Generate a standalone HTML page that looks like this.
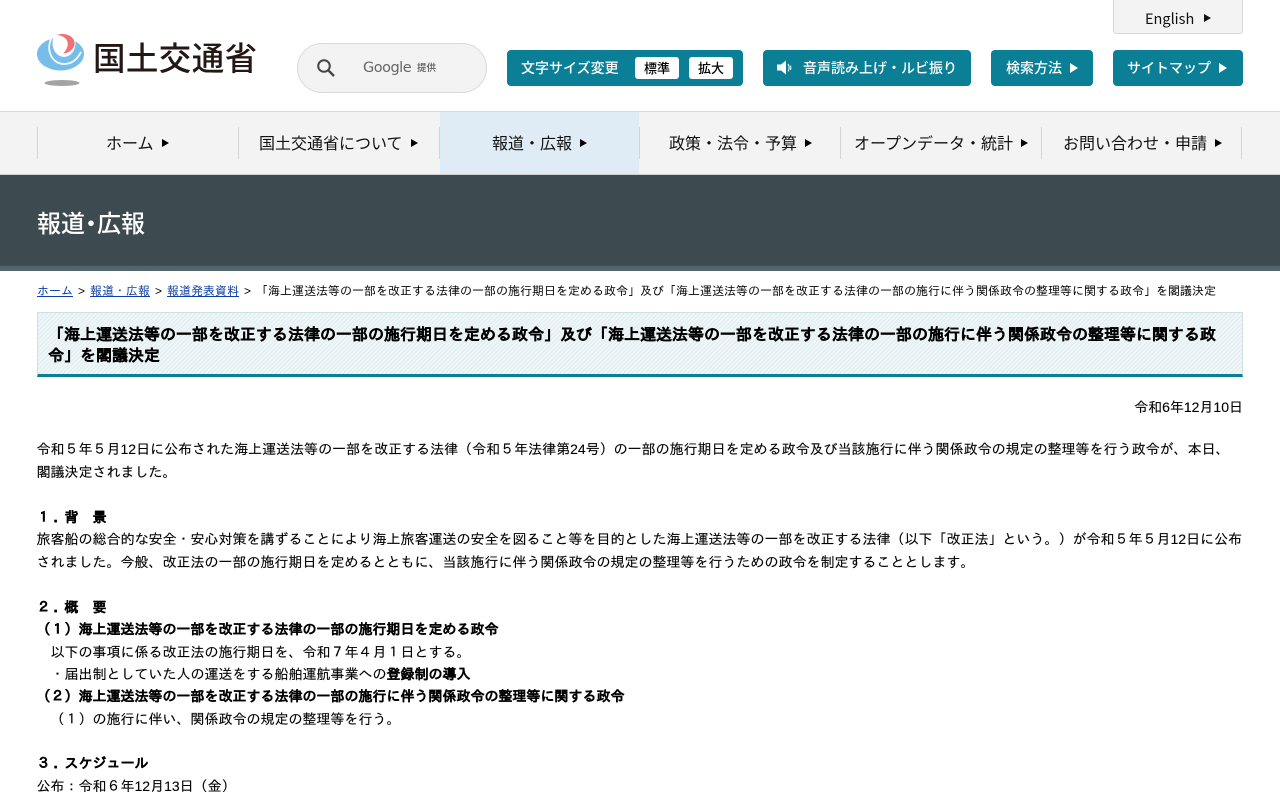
<!DOCTYPE html>
<html lang="ja">
<head>
<meta charset="utf-8">
<title>報道・広報</title>
<style>
html,body{margin:0;padding:0;background:#fff;}
body{width:1280px;height:800px;overflow:hidden;position:relative;font-family:"Liberation Sans","IPAGothic",sans-serif;font-size:14px;color:#000;}
.a{position:absolute;white-space:nowrap;}
.btn{position:absolute;top:50px;height:36px;background:#0b7f96;border-radius:4px;color:#fff;font-weight:500;font-size:14px;line-height:36px;white-space:nowrap;font-family:"Noto Sans CJK JP",sans-serif;}
.btn span{position:absolute;top:0;}
.tri{position:absolute;width:0;height:0;border-style:solid;border-color:transparent transparent transparent currentColor;}
.sep{position:absolute;top:127px;width:1px;height:32px;background:#d4d4d4;}
.nav{position:absolute;top:127px;height:32px;line-height:31px;font-size:16px;white-space:nowrap;font-family:"Noto Sans CJK JP",sans-serif;color:#111;}
.l{position:absolute;left:36.500px;white-space:nowrap;line-height:22px;height:22px;font-size:14px;-webkit-text-stroke:.12px #000;}
b{font-weight:bold;}
a{color:#0b3fa8;text-decoration:underline;}
.bc i{font-style:normal;margin:0 5px;}
.d{position:relative;left:3px;}
</style>
</head>
<body>

<!-- logo -->
<svg class="a" style="left:37px;top:33px" width="48" height="54" viewBox="0 0 48 54">
<ellipse cx="25" cy="50" rx="17.500" ry="3" fill="#a3a3a3"/>
<ellipse cx="23.500" cy="21" rx="23.500" ry="16.500" fill="#76bdea"/>
<path d="M15 4C8 17 15 31 27 31C34 31 40 27 44 19" fill="none" stroke="#fff" stroke-width="1.800"/>
<ellipse cx="27" cy="10" rx="11.500" ry="14" fill="#fff"/>
<path d="M20 2C27 -0.500 36 2 37.500 9C38.500 15 33 20 26 20.500C29.500 17 31.500 13 30.500 9C29.500 5 25.500 2.500 20 2Z" fill="#ee7176"/>
</svg>
<div class="a" style="left:93px;top:36px;font-family:'Noto Sans CJK JP',sans-serif;font-size:32.500px;line-height:42px;letter-spacing:0.400px;color:#231815;font-weight:500">国土交通省</div>

<!-- search -->
<div class="a" style="left:297px;top:43px;width:188px;height:48px;border:1px solid #d9d9d9;border-radius:25px;background:#f3f3f3"></div>
<svg class="a" style="left:316px;top:58px" width="20" height="20" viewBox="0 0 20 20"><circle cx="8" cy="8" r="5.800" fill="none" stroke="#444" stroke-width="2"/><path d="M12.300 12.300L18 18" stroke="#444" stroke-width="2.400"/></svg>
<div class="a" style="left:363px;top:58px;font-family:'DejaVu Sans',sans-serif;font-size:14.500px;line-height:20px;color:#666;letter-spacing:-0.500px">Google</div>
<div class="a" style="left:417px;top:60px;font-family:'Noto Sans CJK JP',sans-serif;font-size:9.500px;line-height:14px;color:#555;font-weight:500">提供</div>

<!-- english -->
<div class="a" style="left:1113px;top:-2px;width:128px;height:34px;border:1px solid #d8d8d8;border-radius:3px;background:#f3f3f3"></div>
<div class="a" style="left:1145px;top:9px;font-size:14.500px;line-height:20px;font-family:'Noto Sans CJK JP',sans-serif;color:#111">English</div>
<div class="tri" style="left:1204px;top:14px;border-width:4.500px 0 4.500px 7px;color:#111"></div>

<!-- buttons -->
<div class="btn" style="left:507px;width:236px"><span style="left:14px;font-size:14px">文字サイズ変更</span>
<div class="a" style="left:128px;top:7px;width:44px;height:22px;background:#fff;border-radius:3px;color:#000;font-size:13px;line-height:22px;text-align:center">標準</div>
<div class="a" style="left:182px;top:7px;width:44px;height:22px;background:#fff;border-radius:3px;color:#000;font-size:13px;line-height:22px;text-align:center">拡大</div></div>
<div class="btn" style="left:763px;width:208px">
<svg class="a" style="left:13px;top:9px" width="20" height="18" viewBox="0 0 20 18"><path d="M1 5.500H5L10 1.500V15.500L5 11.500H1Z" fill="#fff"/><path d="M13 5C14.500 7.500 14.500 10 13 12.500M15.500 6.500C16 8 16 9.500 15.500 11" stroke="#fff" stroke-width="1" fill="none" transform="translate(-1 0)"/></svg>
<span style="left:40px;font-size:14px">音声読み上げ・ルビ振り</span></div>
<div class="btn" style="left:991px;width:102px"><span style="left:15px;font-size:14px">検索方法</span><div class="tri" style="left:79px;top:13px;border-width:5px 0 5px 8px;color:#fff"></div></div>
<div class="btn" style="left:1113px;width:130px"><span style="left:14px;font-size:14px">サイトマップ</span><div class="tri" style="left:106px;top:13px;border-width:5px 0 5px 8px;color:#fff"></div></div>

<!-- nav -->
<div class="a" style="left:0;top:111px;width:1280px;height:64px;background:#f3f3f3;border-top:1px solid #d9d9d9;border-bottom:1px solid #cfcfcf;box-sizing:border-box"></div>
<div class="a" style="left:440px;top:112px;width:199px;height:62px;background:#dfebf5"></div>
<div class="sep" style="left:37px"></div><div class="sep" style="left:238px"></div><div class="sep" style="left:439px"></div><div class="sep" style="left:639px"></div><div class="sep" style="left:840px"></div><div class="sep" style="left:1041px"></div><div class="sep" style="left:1241px"></div>
<div class="nav" style="left:106px">ホーム</div><div class="tri" style="left:162px;top:139px;border-width:4.500px 0 4.500px 7px"></div>
<div class="nav" style="left:259px">国土交通省について</div><div class="tri" style="left:411px;top:139px;border-width:4.500px 0 4.500px 7px"></div>
<div class="nav" style="left:492px">報道・広報</div><div class="tri" style="left:580px;top:139px;border-width:4.500px 0 4.500px 7px"></div>
<div class="nav" style="left:669px">政策・法令・予算</div><div class="tri" style="left:805px;top:139px;border-width:4.500px 0 4.500px 7px"></div>
<div class="nav" style="left:854px">オープンデータ・統計</div><div class="tri" style="left:1021px;top:139px;border-width:4.500px 0 4.500px 7px"></div>
<div class="nav" style="left:1063px">お問い合わせ・申請</div><div class="tri" style="left:1215px;top:139px;border-width:4.500px 0 4.500px 7px"></div>

<!-- banner -->
<div class="a" style="left:0;top:175px;width:1280px;height:96px;background:#3d4a50;border-bottom:5px solid #55656c;box-sizing:border-box"></div>
<div class="a" style="left:37px;top:205px;color:#fff;font-family:'Noto Sans CJK JP',sans-serif;font-size:24px;line-height:34px;font-weight:500">報道<span style="margin:0 -6px">・</span>広報</div>

<!-- breadcrumb -->
<div class="a bc" style="left:37px;top:282px;font-size:12px;line-height:18px"><a>ホーム</a><i>&gt;</i><a>報道・広報</a><i>&gt;</i><a>報道発表資料</a><i>&gt;</i>「海上運送法等の一部を改正する法律の一部の施行期日を定める政令」及び「海上運送法等の一部を改正する法律の一部の施行に伴う関係政令の整理等に関する政令」を閣議決定</div>

<!-- title -->
<div class="a" style="left:37px;top:312px;width:1206px;height:65px;box-sizing:border-box;border:1px solid #cfdfe3;border-bottom:3px solid #0b7f96;background:repeating-linear-gradient(135deg,#e3eff2 0,#e3eff2 1.500px,#f1f7f8 1.500px,#f1f7f8 3px)"></div>
<div class="a" style="left:48px;top:325px;width:1180px;font-size:16px;line-height:21px;font-weight:bold;white-space:normal;-webkit-text-stroke:.25px #000">「海上運送法等の一部を改正する法律の一部の施行期日を定める政令」及び「海上運送法等の一部を改正する法律の一部の施行に伴う関係政令の整理等に関する政令」を閣議決定</div>

<!-- body -->
<div class="a" style="right:37px;top:396px;line-height:22px;-webkit-text-stroke:.12px #000">令和6年12月10日</div>
<div class="l" style="top:438px">令和５年５月12日に公布された海上運送法等の一部を改正する法律（令和５年法律第24号）の一部の施行期日を定める政令及び当該施行に伴う関係政令の規定の整理等を行う政令が、本日、</div>
<div class="l" style="top:461px">閣議決定されました。</div>
<div class="l" style="top:506px"><b>１<span class="d">．</span>背　景</b></div>
<div class="l" style="top:528px">旅客船の総合的な安全・安心対策を講ずることにより海上旅客運送の安全を図ること等を目的とした海上運送法等の一部を改正する法律（以下「改正法」という。）が令和５年５月12日に公布</div>
<div class="l" style="top:551px">されました。今般、改正法の一部の施行期日を定めるとともに、当該施行に伴う関係政令の規定の整理等を行うための政令を制定することとします。</div>
<div class="l" style="top:596px"><b>２<span class="d">．</span>概　要</b></div>
<div class="l" style="top:618px"><b>（１）海上運送法等の一部を改正する法律の一部の施行期日を定める政令</b></div>
<div class="l" style="top:641px">　以下の事項に係る改正法の施行期日を、令和７年４月１日とする。</div>
<div class="l" style="top:663px">　・届出制としていた人の運送をする船舶運航事業への<b>登録制の導入</b></div>
<div class="l" style="top:685px"><b>（２）海上運送法等の一部を改正する法律の一部の施行に伴う関係政令の整理等に関する政令</b></div>
<div class="l" style="top:708px">　（１）の施行に伴い、関係政令の規定の整理等を行う。</div>
<div class="l" style="top:752px"><b>３<span class="d">．</span>スケジュール</b></div>
<div class="l" style="top:775px">公布：令和６年12月13日（金）</div>

</body>
</html>
